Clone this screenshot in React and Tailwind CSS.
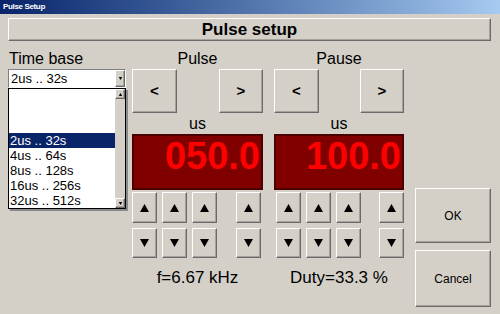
import React from 'react';

const raised =
  'bg-[#d4d0c8] border border-t-white border-l-white border-b-[#6a6a6a] border-r-[#6a6a6a] shadow-[inset_-1px_-1px_0_#a6a39c]';

function Tri({ down, w = 9, h = 8 }) {
  return (
    <svg width={w} height={h} viewBox="0 0 9 8">
      {down ? <polygon points="0,0 9,0 4.5,8" fill="#000" /> : <polygon points="0,8 9,8 4.5,0" fill="#000" />}
    </svg>
  );
}

function Btn({ className, children }) {
  return <div className={`${raised} flex items-center justify-center ${className}`}>{children}</div>;
}

const ranges = ['2us .. 32s', '4us .. 64s', '8us .. 128s', '16us .. 256s', '32us .. 512s'];

function Channel({ label, value, text, colClass, firstPad, lastGap }) {
  const arrows = (down) => (
    <div className={`flex gap-[5px] ${firstPad}`}>
      <Btn className="w-[25px] h-full"><Tri down={down} /></Btn>
      <Btn className="w-[25px] h-full"><Tri down={down} /></Btn>
      <Btn className="w-[25px] h-full"><Tri down={down} /></Btn>
      <Btn className={`w-[25px] h-full ${lastGap}`}><Tri down={down} /></Btn>
    </div>
  );
  return (
    <div className={`flex flex-col ${colClass}`}>
      <div className="h-[20px] text-[16px] leading-[19px] text-center">{label}</div>
      <div className="h-[44px] flex justify-between">
        <Btn className="w-[45px] h-[44px] text-[15px] font-bold">&lt;</Btn>
        <Btn className="w-[44px] h-[44px] text-[15px] font-bold">&gt;</Btn>
      </div>
      <div className="h-[21px] text-[16px] leading-[21px] text-center">us</div>
      <div className="h-[56px] bg-[#800000] border-2 border-[#4a0000] text-right text-[#ff0000] font-bold text-[38px] leading-[40px] pr-[1px]">
        {value}
      </div>
      <div className="h-[31px] mt-[2px] [&>div]:h-full">{arrows(false)}</div>
      <div className="h-[30px] mt-[5px] [&>div]:h-full">{arrows(true)}</div>
      <div className="mt-[10px] text-[17px] leading-[20px] text-center">{text}</div>
    </div>
  );
}

export default function App() {
  return (
    <div className="w-[500px] h-[314px] overflow-hidden bg-[#d4d0c8] text-black font-['Liberation_Sans',Arial,sans-serif] flex flex-col">
      <div className="h-[14px] bg-linear-to-r from-[#0a246a] to-[#a6caf0] flex items-center pl-[3px]">
        <span className="text-white font-bold text-[8px] tracking-[-0.35px] leading-[10px]">Pulse Setup</span>
      </div>

      <div className="px-[8px] pt-[4px]">
        <div className="w-[483px] h-[23px] border border-t-white border-l-white border-b-[#6a6a6a] border-r-[#6a6a6a] shadow-[inset_-1px_-1px_0_#a6a39c] flex items-center justify-center">
          <span className="font-bold text-[17px] leading-[20px]">Pulse setup</span>
        </div>
      </div>

      <div className="flex pl-[8px] pt-[8px]">
        {/* time base */}
        <div className="w-[118px] flex flex-col">
          <div className="h-[20px] text-[16px] leading-[19px] pl-[1px]">Time base</div>
          <div className="h-[19px] bg-white border border-t-[#808080] border-l-[#808080] border-b-white border-r-white flex">
            <span className="flex-1 text-[13px] leading-[17px] pl-[2px]">2us .. 32s</span>
            <div className={`${raised} w-[10px] flex items-center justify-center`}>
              <Tri down w={5} h={3} />
            </div>
          </div>
          <div className="h-[121px] bg-white border border-black flex shadow-[2px_2px_0_#8a8a8a]">
            <div className="flex-1 flex flex-col pt-[44px] overflow-hidden">
              {ranges.map((r, i) => (
                <div
                  key={r}
                  className={`h-[15px] shrink-0 text-[13px] leading-[15px] pl-[1px] ${i === 0 ? 'bg-[#0a246a] text-white' : ''}`}
                >
                  {r}
                </div>
              ))}
            </div>
            <div className="w-[10px] bg-[#d4d0c8] flex flex-col justify-between">
              <div className={`${raised} h-[10px] flex items-center justify-center`}>
                <Tri w={5} h={3} />
              </div>
              <div className={`${raised} h-[10px] flex items-center justify-center`}>
                <Tri down w={5} h={3} />
              </div>
            </div>
          </div>
        </div>

        <Channel
          label="Pulse"
          value="050.0"
          text="f=6.67 kHz"
          colClass="w-[131px] ml-[6px]"
          firstPad=""
          lastGap="ml-[14px]"
        />
        <Channel
          label="Pause"
          value="100.0"
          text="Duty=33.3 %"
          colClass="w-[130px] ml-[11px]"
          firstPad="pl-[2px]"
          lastGap="ml-[13px]"
        />

        {/* dialog buttons */}
        <div className="w-[76px] ml-[11px] pt-[139px] flex flex-col gap-[7px]">
          <Btn className="h-[55px] text-[12px]">OK</Btn>
          <Btn className="h-[57px] text-[12px]">Cancel</Btn>
        </div>
      </div>
    </div>
  );
}
